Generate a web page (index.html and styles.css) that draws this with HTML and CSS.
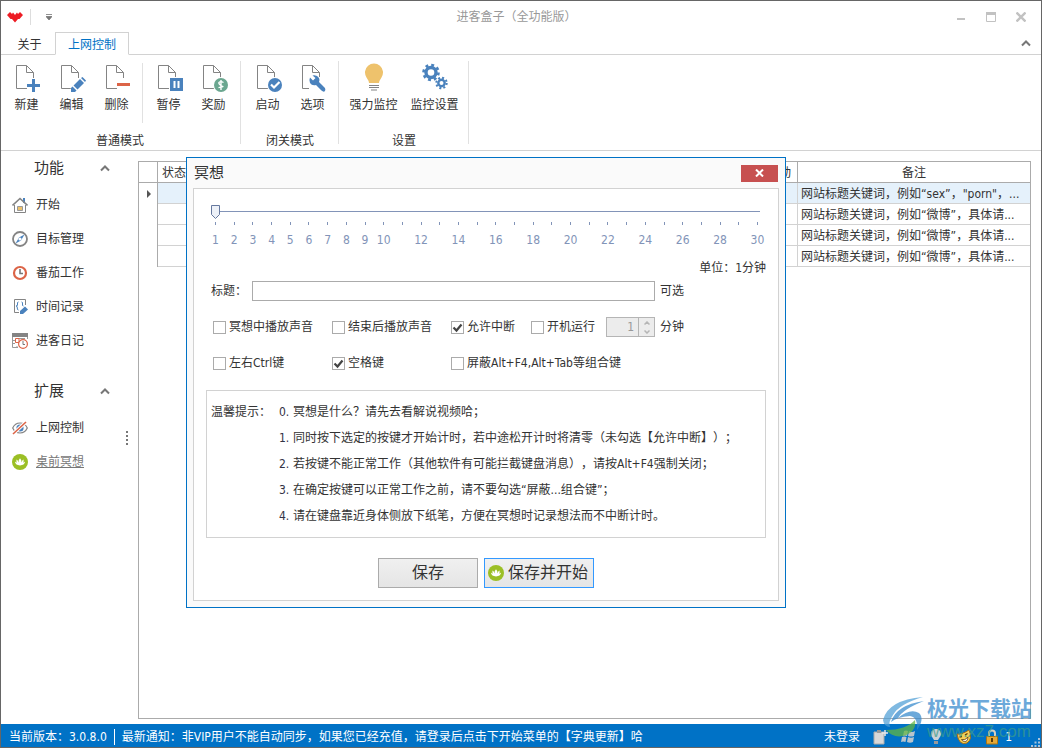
FILE: index.html
```html
<!DOCTYPE html>
<html lang="zh-CN">
<head>
<meta charset="utf-8">
<title>进客盒子（全功能版）</title>
<link rel="stylesheet" href="styles.css">
</head>
<body>
<svg class="defs" aria-hidden="true">
  <symbol id="page" viewBox="0 0 28 30">
    <path d="M20.500 15V9.500L13.500 2.500H3.500V25.500H14" fill="none" stroke="#848484"/>
    <path d="M13.500 2.500V9.500H20.500" fill="none" stroke="#848484"/>
  </symbol>
  <symbol id="lotus" viewBox="0 0 16 16">
    <circle cx="8" cy="8" r="8" fill="#9bbf25"/>
    <path d="M8 4.200Q10 6 9.300 8.500Q10.200 6 11.500 5.400Q12 7 11 9Q12 7.800 13 7.800Q12.500 11.200 8 11.500Q3.500 11.200 3 7.800Q4 7.800 5 9Q4 7 4.500 5.400Q5.800 6 6.700 8.500Q6 6 8 4.200Z" fill="#fff"/>
  </symbol>
  <symbol id="chevron" viewBox="0 0 10 8"><path d="M1 6.500L5 2.500L9 6.500" fill="none" stroke="#777" stroke-width="2"/></symbol>
</svg>

<div class="window">
  <header class="titlebar">
    <div class="quick">
      <svg class="logo" width="16" height="12" viewBox="0 0 16 12"><path d="M0 4L3 1L5 3L6 1.500L8 4L10 1.500L11 3L13 1L16 4L12.500 8H11L8 11.500L5 8H3.500Z" fill="#ed1c24"/></svg>
      <span class="quick-sep"></span>
      <button class="plain quick-more" aria-label="更多"><svg width="6" height="6" viewBox="0 0 6 6"><path d="M0 .5H6M0 2.500H6L3 6Z" stroke="#777" fill="#777" stroke-width=".8"/></svg></button>
    </div>
    <h1 class="app-title">进客盒子（全功能版）</h1>
    <div class="caption">
      <button class="plain" aria-label="最小化"><svg width="10" height="10"><path d="M1 7H9" stroke="#c2c2c2" stroke-width="2"/></svg></button>
      <button class="plain" aria-label="最大化"><svg width="10" height="10"><path d="M.5 1V9.500H9.500V1" fill="none" stroke="#c2c2c2"/><path d="M0 1.500H10" stroke="#c2c2c2" stroke-width="3"/></svg></button>
      <button class="plain" aria-label="关闭"><svg width="10" height="10"><path d="M.5 .5L9.500 9.500M9.500 .5L.5 9.500" stroke="#c2c2c2" stroke-width="2.400"/></svg></button>
    </div>
  </header>

  <nav class="tabs">
    <button class="tab">关于</button>
    <button class="tab tab-active">上网控制</button>
    <button class="plain collapse" aria-label="折叠"><svg width="10" height="8"><use href="#chevron"/></svg></button>
  </nav>

  <section class="ribbon">
    <div class="group">
      <div class="tools">
        <button class="tool"><svg width="28" height="30" viewBox="0 0 28 30"><use href="#page"/><path d="M20.500 15V28M13 22.500H26" stroke="#fff" stroke-width="5"/><path d="M20.500 16V29M14 22.500H27" stroke="#4a82bd" stroke-width="3"/></svg>新建</button>
        <button class="tool"><svg width="28" height="30" viewBox="0 0 28 30"><use href="#page"/><path d="M12 30L13 24L24 13L28 18L19 30Z" fill="#fff"/><path d="M13 29V25L14.500 23.500L18.500 27.500L17 29ZM15.500 22.500L22 16L26 20L19.500 26.500ZM23 15L24.500 14L28 17.500L27 19Z" fill="#4a82bd"/></svg>编辑</button>
        <button class="tool"><svg width="28" height="30" viewBox="0 0 28 30"><use href="#page"/><path d="M13 21.500H27" stroke="#fff" stroke-width="6"/><path d="M14 21.500H27" stroke="#dc6447" stroke-width="3"/></svg>删除</button>
        <span class="tool-sep"></span>
        <button class="tool"><svg width="28" height="30" viewBox="0 0 28 30"><use href="#page"/><path d="M14 14H28V29H14Z" fill="#fff"/><path d="M15 15H28V28H15Z" fill="#4a82bd"/><path d="M19.500 18V25M23.500 18V25" stroke="#fff" stroke-width="2"/></svg>暂停</button>
        <button class="tool"><svg width="28" height="30" viewBox="0 0 28 30"><use href="#page"/><circle cx="21" cy="22" r="8" fill="#fff"/><circle cx="21" cy="22" r="7" fill="#6ba790"/><path d="M23.500 19.500Q21 18 19.500 19T20 21.700T22.800 23.500T18.500 24.600M21 17V27" fill="none" stroke="#fff" stroke-width="1.400"/></svg>奖励</button>
      </div>
      <p class="group-name">普通模式</p>
    </div>
    <div class="group">
      <div class="tools">
        <button class="tool"><svg width="28" height="30" viewBox="0 0 28 30"><use href="#page"/><circle cx="21" cy="22" r="8" fill="#fff"/><circle cx="21" cy="22" r="7" fill="#4a82bd"/><path d="M17 21.500L20 24.500L25.500 19" fill="none" stroke="#fff" stroke-width="2.200"/></svg>启动</button>
        <button class="tool"><svg width="28" height="30" viewBox="0 0 28 30"><use href="#page"/><path d="M10 14H22V30H10Z" fill="#fff"/><path d="M11 14.500L14 17.500L16.500 15L13.500 12.500Q18 11.500 20 15Q21 17 20 19L26 25Q27 27 25.500 28.500Q24 29 22.500 27.500L17 22Q13 23 11 20Q9.800 17 11 14.500Z" fill="#4a82bd"/></svg>选项</button>
      </div>
      <p class="group-name">闭关模式</p>
    </div>
    <div class="group">
      <div class="tools">
        <button class="tool tool-wide"><svg width="28" height="30" viewBox="0 0 28 30"><path d="M9 20Q9 18 6.500 14.500A9 9 0 1 1 21.500 14.500Q19 18 19 20Z" fill="#eec26c"/><path d="M9 22.500H19M9 24.500H19M11 27H17" stroke="#848484" stroke-width="1.200"/></svg>强力监控</button>
        <button class="tool tool-wide"><svg width="28" height="30" viewBox="0 0 28 30"><g fill="none" stroke="#4a82bd"><circle cx="10" cy="9.500" r="5" stroke-width="3.400"/><circle cx="10" cy="9.500" r="7.500" stroke-width="2.600" stroke-dasharray="2.900 2.990"/><circle cx="20.500" cy="20" r="3.200" stroke-width="2.400"/><circle cx="20.500" cy="20" r="5.200" stroke-width="2" stroke-dasharray="2 2.080"/></g></svg>监控设置</button>
      </div>
      <p class="group-name">设置</p>
    </div>
  </section>

  <main class="body">
    <aside class="sidebar">
      <h2 class="side-head">功能<svg width="10" height="8"><use href="#chevron"/></svg></h2>
      <a class="side-item" href="#"><svg width="16" height="16"><path d="M2.500 8V15.500H13.500V8" fill="none" stroke="#848484"/><path d="M12 1V6" stroke="#4a82bd" stroke-width="2"/><path d="M.5 8.500L8 1.500L15.500 8.500" fill="none" stroke="#848484" stroke-width="1.600"/><path d="M5.500 9.500H10.500V13.500H5.500Z" fill="#eec26c" stroke="#999"/></svg>开始</a>
      <a class="side-item" href="#"><svg width="16" height="16"><circle cx="8" cy="8" r="7" fill="none" stroke="#848484" stroke-width="1.800"/><path d="M3.500 12.500L7 6.500L12.500 3.500L9 9.500Z" fill="#4a82bd"/><circle cx="8" cy="8" r="1.600" fill="#fff"/></svg>目标管理</a>
      <a class="side-item" href="#"><svg width="16" height="16"><circle cx="8" cy="8" r="6" fill="none" stroke="#dc6447" stroke-width="2.200"/><path d="M8 4V8.500H11" fill="none" stroke="#777" stroke-width="1.600"/></svg>番茄工作</a>
      <a class="side-item" href="#"><svg width="16" height="16"><path d="M7 13.500H2.500V.5H13.500V6" fill="none" stroke="#848484"/><path d="M6.500 3Q5 3 5.500 5T4 7Q5.500 7 5.300 9T6.500 11M9.500 3Q11 3 10.500 5T11.500 7" fill="none" stroke="#4a82bd"/><path d="M8 15V12L13 7.500L16 10.500L11 15Z" fill="#4a82bd"/></svg>时间记录</a>
      <a class="side-item" href="#"><svg width="16" height="16"><path d="M0 0H16V4H0Z" fill="#848484"/><path d="M.5 4V14.500H6M15.500 4V6M1 7.500H3M1 10.500H3M5 13V15M6 5.500H13" fill="none" stroke="#999"/><path d="M3.500 5.500H7V9.500H3.500Z" fill="none" stroke="#dc6447"/><circle cx="11" cy="11" r="4.400" fill="#fff" stroke="#dc6447" stroke-width="1.200"/><path d="M11 8V11.500H13" fill="none" stroke="#777"/></svg>进客日记</a>
      <h2 class="side-head side-head-next">扩展<svg width="10" height="8"><use href="#chevron"/></svg></h2>
      <a class="side-item" href="#"><svg width="16" height="16"><path d="M.7 8Q3 3 8 3T15.300 8Q13 13 8 13T.7 8Z" fill="#fff" stroke="#848484" stroke-width="1.200"/><circle cx="8" cy="8" r="3.600" fill="#4a82bd"/><path d="M1 14L14 2" stroke="#fff" stroke-width="3.500"/><path d="M1 14L14 2" stroke="#dc6447" stroke-width="1.600"/></svg>上网控制</a>
      <a class="side-item side-current" href="#"><svg width="16" height="16"><use href="#lotus"/></svg>桌前冥想</a>
    </aside>
    <div class="splitter"><i></i><i></i><i></i><i></i></div>
    <div class="grid">
      <table class="records">
        <colgroup><col class="c-mark"><col class="c-state"><col><col class="c-move"><col class="c-note"></colgroup>
        <thead><tr><th></th><th>状态</th><th></th><th>动</th><th>备注</th></tr></thead>
        <tbody>
          <tr class="selected"><td><svg width="4" height="8"><path d="M0 0L4 4L0 8Z" fill="#555"/></svg></td><td></td><td></td><td></td><td>网站标题关键词，例如“sex”，"porn"，...</td></tr>
          <tr><td></td><td></td><td></td><td></td><td>网站标题关键词，例如“微博”，具体请...</td></tr>
          <tr><td></td><td></td><td></td><td></td><td>网站标题关键词，例如“微博”，具体请...</td></tr>
          <tr><td></td><td></td><td></td><td></td><td>网站标题关键词，例如“微博”，具体请...</td></tr>
        </tbody>
      </table>
    </div>
  </main>

  <footer class="status">
    <span class="version">当前版本：3.0.8.0</span>
    <span class="notice">最新通知：非VIP用户不能自动同步，如果您已经充值，请登录后点击下开始菜单的【字典更新】哈</span>
    <span class="login">未登录</span>
    <div class="tray">
      <svg width="16" height="16"><path d="M2 3H12V15H2Z" fill="#d8d8d8" stroke="#aaa"/><path d="M5 1H9V4H5Z" fill="#999"/><path d="M13 1V7M10 4H16" stroke="#e8e8e8" stroke-width="1.500"/></svg>
      <svg width="16" height="16"><path d="M4 2Q6 1 8 2L7 7Q5 6 3 7ZM9 2Q12 4 15 2L14 7Q11 8 8 7ZM2 8Q4 7 6.500 8L5.500 13Q3 12 1 13ZM8 8Q11 9.500 14 8L13 13Q10 14.500 7 13Z" fill="#b9c4cc"/></svg>
      <svg width="16" height="16"><path d="M6 11L3.500 7A5 5 0 1 1 12.500 7L10 11Z" fill="#c9d1d6"/><path d="M6 12H10V15H6Z" fill="#999"/></svg>
      <svg width="16" height="16"><path d="M1 5Q5 6 13 1Q17 10 11 14Q3 17 1 5Z" fill="#f5cf55" stroke="#a56c13"/><path d="M3.500 8L6 7.500M9 6L11.500 4.500" stroke="#5f3a0b" stroke-width="1.400"/><path d="M5.500 10.500Q9 12 12 8Q11.500 13 8.500 12.500Q6.500 12.500 5.500 10.500Z" fill="#fff" stroke="#5f3a0b" stroke-width=".8"/></svg>
      <svg width="16" height="16"><path d="M5 8V4.500A3 3 0 0 1 11 4.500V8" fill="none" stroke="#d5d0c0" stroke-width="2"/><path d="M2.500 7.500H13.500V15H2.500Z" fill="#e5a937" stroke="#aa7413"/><path d="M8 9V13" stroke="#593b08" stroke-width="2"/></svg>
    </div>
    <span class="count">1</span>
    <svg class="grip" width="9" height="9"><path d="M7 0h2v2h-2zM3.500 3.500h2v2h-2zM7 3.500h2v2h-2zM0 7h2v2h-2zM3.500 7h2v2h-2zM7 7h2v2h-2z" fill="#a9c4dc"/></svg>
  </footer>

  <section class="dialog" role="dialog" aria-labelledby="dlg-title">
    <header class="dlg-head">
      <h2 id="dlg-title">冥想</h2>
      <button class="dlg-close" aria-label="关闭"><svg width="9" height="8"><path d="M1 .5L8 7.500M8 .5L1 7.500" stroke="#fff" stroke-width="2"/></svg></button>
    </header>
    <form class="panel">
      <div class="slider">
        <input class="range" type="range" min="1" max="30" value="1" aria-label="时长">
        <div class="scale">
          <span>1</span><span>2</span><span>3</span><span>4</span><span>5</span><span>6</span><span>7</span><span>8</span><span>9</span><span>10</span><span></span><span>12</span><span></span><span>14</span><span></span><span>16</span><span></span><span>18</span><span></span><span>20</span><span></span><span>22</span><span></span><span>24</span><span></span><span>26</span><span></span><span>28</span><span></span><span>30</span>
        </div>
      </div>
      <p class="unit">单位：1分钟</p>
      <div class="title-row">
        <label for="caption">标题：</label>
        <input class="text" id="caption" type="text">
        <span>可选</span>
      </div>
      <div class="checks">
        <label><input type="checkbox">冥想中播放声音</label>
        <label><input type="checkbox">结束后播放声音</label>
        <label><input type="checkbox" checked>允许中断</label>
        <label><input type="checkbox">开机运行</label>
        <div class="minutes">
          <div class="spin">
            <input id="mins" type="text" value="1" disabled>
            <div class="arrows">
              <svg width="6" height="4"><path d="M.5 3.500L3 1L5.500 3.500" fill="none" stroke="#b5b5b5" stroke-width="1.500"/></svg>
              <svg width="6" height="4"><path d="M.5 .5L3 3L5.500 .5" fill="none" stroke="#b5b5b5" stroke-width="1.500"/></svg>
            </div>
          </div>
          <label for="mins">分钟</label>
        </div>
        <label><input type="checkbox">左右Ctrl键</label>
        <label><input type="checkbox" checked>空格键</label>
        <label class="span"><input type="checkbox">屏蔽Alt+F4,Alt+Tab等组合键</label>
      </div>
      <div class="tips">
        <span class="tips-name">温馨提示：</span>
        <ul>
          <li><b>0.</b>冥想是什么？请先去看解说视频哈；</li>
          <li><b>1.</b>同时按下选定的按键才开始计时，若中途松开计时将清零（未勾选【允许中断】）；</li>
          <li><b>2.</b>若按键不能正常工作（其他软件有可能拦截键盘消息），请按Alt+F4强制关闭；</li>
          <li><b>3.</b>在确定按键可以正常工作之前，请不要勾选“屏蔽...组合键”；</li>
          <li><b>4.</b>请在键盘靠近身体侧放下纸笔，方便在冥想时记录想法而不中断计时。</li>
        </ul>
      </div>
      <div class="actions">
        <button class="btn" type="button">保存</button>
        <button class="btn btn-main" type="button"><svg width="16" height="16"><use href="#lotus"/></svg>保存并开始</button>
      </div>
    </form>
  </section>

  <div class="brand">
    <svg width="46" height="44" viewBox="0 0 46 44"><path d="M0 24Q5 4 40 1Q16 8 10 19Q5 26 7 31Q1 31 0 24Z" fill="#4f9fd6"/><path d="M8 26Q13 9 41 5Q20 13 15 22Q27 12 36 17Q42 23 34 34Q35 21 27 20Q14 21 8 26Z" fill="#3489cc"/><path d="M3 34Q23 34 32 24Q34 36 20 40Q10 42 3 34Z" fill="#65b741"/></svg>
    <div><strong>极光下载站</strong><span>www.xz7.com</span></div>
  </div>
</div>
</body>
</html>
```
FILE: styles.css
```css
* { box-sizing: border-box; }
html, body { height: 100%; margin: 0; }
body {
  font: 12px/16px "DejaVu Sans Condensed", "Noto Sans CJK SC", sans-serif;
  text-spacing-trim: space-all;
  color: #333;
  background: #fff;
}
h1, h2, p, ul { margin: 0; padding: 0; font-weight: 400; list-style: none; }
button, input { font: inherit; color: inherit; margin: 0; padding: 0; }
svg { flex: none; display: block; }
.defs { position: absolute; width: 0; height: 0; }
.plain { display: flex; align-items: center; justify-content: center; border: 0; background: none; }

.window {
  position: relative;
  display: flex;
  flex-direction: column;
  min-height: 100vh;
  border: 1px solid #666;
}

.titlebar { display: grid; grid-template-columns: 1fr auto 1fr; align-items: center; height: 31px; padding: 0 15px 0 6px; }
.quick { display: flex; align-items: center; }
.quick-sep { width: 1px; height: 16px; margin-left: 7px; background: #ddd; }
.quick-more { margin-left: 15px; }
.app-title { font-size: 12px; color: #999; }
.caption { display: flex; justify-content: flex-end; gap: 20px; }

.tabs { display: flex; height: 23px; padding: 0 10px 0 3px; border-bottom: 1px solid #d2d2d2; }
.tab { height: 23px; width: 51px; padding-top: 3px; border: 1px solid transparent; background: none; }
.tab-active { width: 74px; border-color: #d2d2d2 #d2d2d2 #fff; background: #fff; color: #0072c6; }
.collapse { margin-left: auto; }

.ribbon { display: flex; height: 96px; border-bottom: 1px solid #d2d2d2; }
.group { display: flex; flex-direction: column; justify-content: space-between; margin: 6px 0; padding: 0 4px 0 3px; border-right: 1px solid #e1e1e1; }
.group + .group { padding-left: 4px; padding-right: 3px; }
.tools { display: flex; padding-top: 2px; }
.tool { display: flex; flex-direction: column; align-items: center; gap: 4px; width: 45px; border: 0; background: none; }
.tool-wide { width: 61px; }
.tool-sep { width: 1px; height: 60px; margin: 0 3px; background: #e1e1e1; }
.group-name { text-align: center; margin-bottom: -5px; }

.body { display: flex; flex: 1; }
.sidebar { width: 117px; }
.side-head { display: flex; align-items: center; justify-content: space-between; height: 34px; margin-bottom: 3px; padding: 0 8px 0 33px; font-size: 15px; }
.side-head-next { margin-top: 16px; }
.side-item { display: flex; align-items: center; gap: 8px; height: 34px; padding-left: 11px; color: inherit; text-decoration: none; }
.side-current { color: #777; text-decoration: underline; }
.splitter { display: flex; flex-direction: column; justify-content: center; align-items: center; gap: 2px; width: 20px; padding-right: 3px; }
.splitter i { width: 2px; height: 2px; background: #777; }

.grid { flex: 1; margin: 10px 10px 5px 0; border: 1px solid #ababab; }
.records { width: 100%; table-layout: fixed; border-collapse: separate; border-spacing: 0; white-space: nowrap; }
.c-mark { width: 19px; }
.c-state { width: 33px; }
.c-move { width: 25px; }
.c-note { width: 232px; }
.records th, .records td { height: 21px; padding: 2px 3px 0; border: 0 solid #d2d2d2; border-width: 0 1px 1px 0; font-weight: 400; overflow: hidden; }
.records th { padding: 1px 0 0; border-color: #ababab; }
.records td:first-child { padding: 0 0 0 8px; border-color: #ababab; border-bottom-width: 0; }
.records th:last-child, .records td:last-child { border-right-width: 0; }
.selected td:not(:first-child) { background: #e5f1fb; }

.status { display: flex; align-items: center; height: 23px; padding: 2px 1px 0 8px; background: #0072c6; color: #fff; white-space: nowrap; }
.version { padding-right: 7px; border-right: 1px solid #fff; }
.notice { padding-left: 7px; }
.login { margin-left: auto; }
.tray { display: flex; gap: 12px; margin-left: 12px; }
.count { margin-left: 5px; }
.grip { align-self: flex-end; margin-left: 19px; }

.dialog { position: absolute; top: 156px; left: 185px; width: 600px; padding: 0 6px 6px; border: 1px solid #0072c6; background: #fafafa; }
.dlg-head { display: flex; justify-content: space-between; align-items: center; height: 30px; padding: 0 1px; }
.dlg-head h2 { font-size: 15px; line-height: 24px; }
.dlg-close { display: flex; align-items: center; justify-content: center; width: 37px; height: 17px; border: 0; background: #c75050; }
.panel { padding: 16px 12px 12px; border: 1px solid #d2d2d2; background: #fff; }

.slider { padding: 0 4px 0 5px; color: #8294b8; }
.range { display: block; width: 100%; height: 14px; appearance: none; background: linear-gradient(#8294b8, #8294b8) 1px 6px / calc(100% - 3px) 1px no-repeat; }
.range::-webkit-slider-thumb {
  appearance: none;
  width: 9px;
  height: 14px;
  background: url("data:image/svg+xml,%3Csvg xmlns='http://www.w3.org/2000/svg' width='9' height='14'%3E%3Cpath d='M.5.5h8v9l-4 4-4-4z' fill='%23edf1f8' stroke='%2366799f'/%3E%3C/svg%3E") no-repeat;
}
.scale { display: flex; justify-content: space-between; margin: 3px -3px 0; }
.scale span { display: flex; flex-direction: column; align-items: center; gap: 7px; width: 15px; height: 26px; }
.scale span::before { content: ""; flex: none; width: 1px; height: 3px; background: #8294b8; }
.unit { margin-top: 12px; text-align: right; }
.title-row { display: flex; align-items: center; gap: 5px; margin-top: 5px; padding-left: 5px; }
.title-row label { width: 36px; }
.text { width: 403px; height: 20px; border: 1px solid #ababab; background: #fff; }

.checks { display: grid; grid-template-columns: 119px 119px 80px 75px 1fr; grid-auto-rows: 20px; row-gap: 16px; align-items: center; margin-top: 16px; padding-left: 7px; white-space: nowrap; }
.checks label { display: flex; align-items: center; gap: 3px; }
.checks .span { grid-column: span 3; }
.checks input[type="checkbox"] {
  appearance: none;
  width: 13px;
  height: 13px;
  border: 1px solid #ababab;
  background: #fff;
}
.checks input[type="checkbox"]:checked {
  background: url("data:image/svg+xml,%3Csvg xmlns='http://www.w3.org/2000/svg' width='11' height='11'%3E%3Cpath d='M1.500 5.500L4.500 8.500L9.500 2.500' fill='none' stroke='%23444' stroke-width='2.200'/%3E%3C/svg%3E") no-repeat;
}
.minutes { display: flex; align-items: center; gap: 5px; }
.spin { display: flex; width: 49px; height: 20px; border: 1px solid #b5b5b5; background: #ececec; }
.spin input { width: 32px; padding-right: 4px; border: 0; border-right: 1px solid #b5b5b5; background: none; text-align: right; color: #999; }
.arrows { flex: 1; display: flex; flex-direction: column; align-items: center; justify-content: center; gap: 5px; }

.tips { display: flex; margin-top: 17px; padding: 8px 4px; border: 1px solid #d2d2d2; line-height: 26px; white-space: nowrap; }
.tips-name { width: 68px; }
.tips li { display: flex; }
.tips b { width: 14px; font-weight: 400; color: #334; }

.actions { display: flex; justify-content: center; gap: 6px; margin-top: 20px; }
.btn { display: flex; align-items: center; justify-content: center; gap: 4px; width: 100px; height: 30px; border: 1px solid #ababab; background: linear-gradient(#f0f0f0, #e5e5e5); font-size: 16px; }
.btn-main { width: 110px; padding-right: 2px; border-color: #3399ff; }

.brand { position: absolute; right: 9px; bottom: 6px; display: flex; align-items: center; opacity: .72; color: #3489cc; pointer-events: none; }
.brand div { display: flex; flex-direction: column; margin-left: -2px; }
.brand strong { font-size: 21px; line-height: 28px; }
.brand span { font: 17px/18px "Liberation Sans", sans-serif; color: #3c9d8b; }
```
